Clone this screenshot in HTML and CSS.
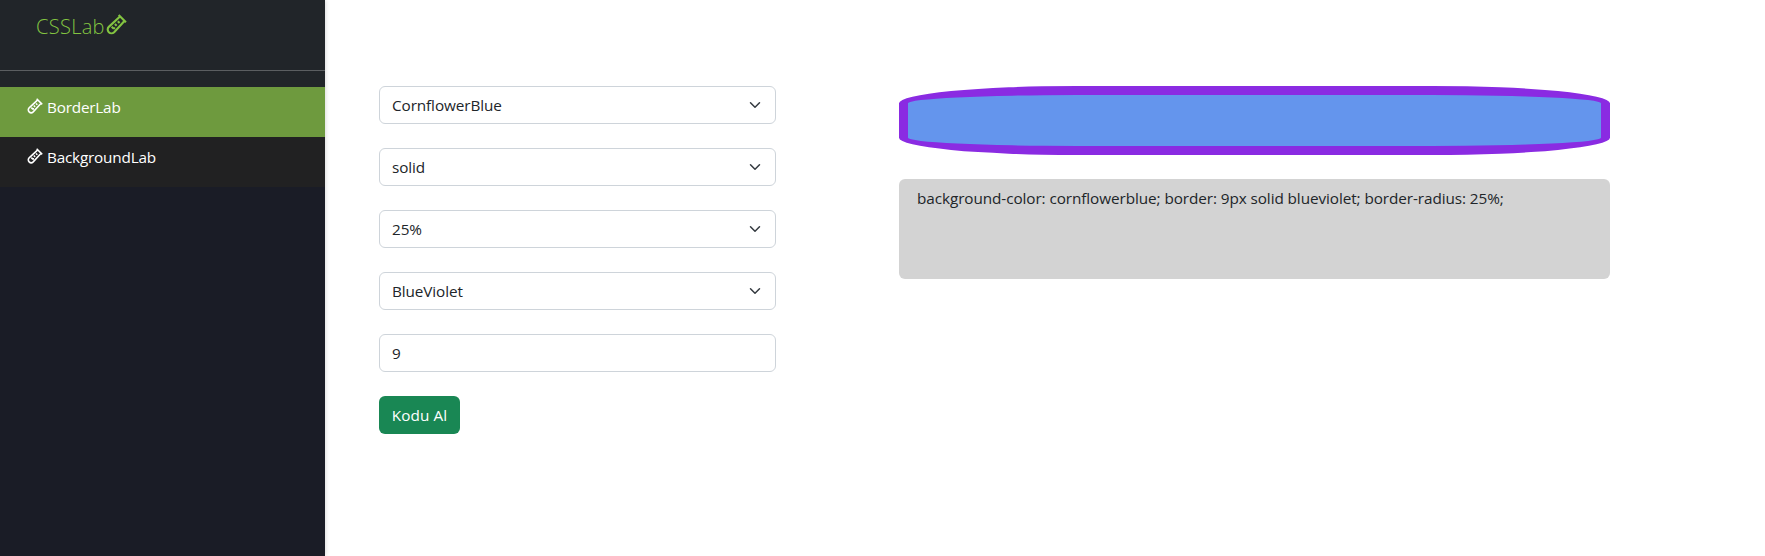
FILE: index.html
```html
<!DOCTYPE html>
<html lang="tr">
<head>
<meta charset="utf-8">
<title>CSSLab</title>
<link rel="stylesheet" href="styles.css">
</head>
<body>
<svg class="sprite" aria-hidden="true">
  <symbol id="tube" viewBox="0 0 24 24">
    <path d="M14.500 1.200 22.800 9.500M15.700 3.200 3.200 14.700a4.300 4.300 0 0 0 6.100 6.100L20.800 8.300M6.500 14.500l1.800 1.800h2.200M10.200 11.300l2 2M13.500 8.200l2 2" fill="none" stroke="currentColor" stroke-width="2.400"/>
  </symbol>
</svg>
<div class="app">
  <aside class="sidebar">
    <header class="brand"><span class="brand-name">CSSLab</span><svg class="brand-icon"><use href="#tube"/></svg></header>
    <nav class="menu">
      <a class="item active"><svg class="item-icon"><use href="#tube"/></svg><span>BorderLab</span></a>
      <a class="item"><svg class="item-icon"><use href="#tube"/></svg><span>BackgroundLab</span></a>
    </nav>
  </aside>
  <main class="content">
    <form class="controls">
      <div class="field"><span>CornflowerBlue</span><svg class="chevron" viewBox="0 0 16 16"><path d="m2 5 6 6 6-6"/></svg></div>
      <div class="field"><span>solid</span><svg class="chevron" viewBox="0 0 16 16"><path d="m2 5 6 6 6-6"/></svg></div>
      <div class="field"><span>25%</span><svg class="chevron" viewBox="0 0 16 16"><path d="m2 5 6 6 6-6"/></svg></div>
      <div class="field"><span>BlueViolet</span><svg class="chevron" viewBox="0 0 16 16"><path d="m2 5 6 6 6-6"/></svg></div>
      <div class="field"><span>9</span></div>
      <button type="button" class="submit">Kodu Al</button>
    </form>
    <section class="result">
      <div class="preview"></div>
      <div class="code"><span>background-color: cornflowerblue; border: 9px solid blueviolet; border-radius: 25%;</span></div>
    </section>
  </main>
</div>
</body>
</html>
```
FILE: styles.css
```css
* { box-sizing: border-box; }
body {
  margin: 0;
  background: #fff;
  color: #212529;
  font: 15.3px/24px "Open Sans", "Noto Sans", sans-serif;
  letter-spacing: -0.1px;
}
.sprite { position: absolute; width: 0; height: 0; }
.app { display: flex; height: 556px; overflow: hidden; }
.sidebar {
  width: 325px;
  flex: none;
  background: #1a1c26;
  color: #fff;
  box-shadow: 0 0 5px rgba(0, 0, 0, .2);
}
.brand {
  display: flex;
  height: 71px;
  padding: 14px 0 0 36px;
  background: #212529;
  border-bottom: 1px solid #5b5e61;
  color: #83c441;
}
.brand-name {
  width: 70px;
  font: 300 20px/26px "Open Sans", sans-serif;
  letter-spacing: .3px;
}
.brand-icon { width: 21px; height: 21px; }
.menu { padding-top: 16px; background: #212529; }
.item {
  display: flex;
  gap: 4px;
  height: 50px;
  padding: 8px 0 0 27px;
  background: #212122;
  letter-spacing: -.2px;
}
.item.active { background: #6e9a3e; }
.item-icon { width: 16px; height: 16px; margin-top: 3px; }
.content { display: flex; padding: 86px 0 0 54px; }
.controls { width: 397px; display: flex; flex-direction: column; gap: 24px; }
.field {
  display: flex;
  justify-content: space-between;
  align-items: center;
  height: 38px;
  padding: 0 12px;
  border: 1px solid #ced4da;
  border-radius: 6px;
}
.chevron { width: 16px; height: 12px; }
.chevron path {
  fill: none;
  stroke: #343a40;
  stroke-width: 2;
  stroke-linecap: round;
  stroke-linejoin: round;
}
.submit {
  align-self: flex-start;
  width: 81px;
  height: 38px;
  padding: 0;
  border: 0;
  border-radius: 6px;
  background: #198754;
  color: #fff;
  font: inherit;
  letter-spacing: .1px;
}
.result { width: 711px; margin-left: 123px; }
.preview {
  height: 69px;
  background: cornflowerblue;
  border: 9px solid blueviolet;
  border-radius: 25%;
}
.code {
  height: 100px;
  margin-top: 24px;
  padding: 7px 18px;
  border-radius: 6px;
  background: #d3d3d3;
  letter-spacing: -.08px;
}
```
